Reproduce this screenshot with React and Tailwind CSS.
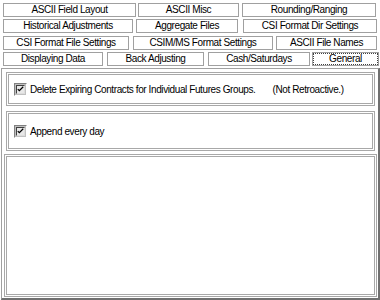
import React from "react";

const font = { fontFamily: '"Liberation Sans", Arial, sans-serif' };

function Tab({ w, ml, children, selected }) {
  return (
    <div
      className={`h-[14px] shrink-0 border border-[#a0a0a0] bg-white flex items-center justify-center text-[10px] tracking-[-0.4px] whitespace-nowrap leading-none text-black ${ml}`}
      style={{ width: w }}
    >
      {selected ? (
        <div className="w-full h-full border border-dotted border-[#404040] flex items-center justify-center">{children}</div>
      ) : (
        children
      )}
    </div>
  );
}

function Check() {
  return (
    <div className="w-[13px] h-[13px] shrink-0 border border-t-[#808080] border-l-[#808080] border-b-white border-r-white bg-[#c0c0c0] p-px">
      <div className="w-full h-full border border-t-[#404040] border-l-[#404040] border-b-[#dcdcdc] border-r-[#dcdcdc] bg-[#e8e8e8] flex items-center justify-center">
        <svg width="9" height="9" viewBox="0 0 9 9">
          <path d="M1 4 L3 6 L8 1" stroke="#000" strokeWidth="1.6" fill="none" />
        </svg>
      </div>
    </div>
  );
}

export default function App() {
  return (
    <div className="w-[380px] h-[300px] bg-white flex flex-col overflow-hidden" style={font}>
      <div className="flex pt-[3px]">
        <Tab w={133} ml="ml-[3px]">ASCII Field Layout</Tab>
        <Tab w={101} ml="ml-[2px]">ASCII Misc</Tab>
        <Tab w={134} ml="ml-[3px]">Rounding/Ranging</Tab>
      </div>
      <div className="flex mt-[2px]">
        <Tab w={130} ml="ml-[3px]">Historical Adjustments</Tab>
        <Tab w={102} ml="ml-[3px]">Aggregate Files</Tab>
        <Tab w={134} ml="ml-[5px]">CSI Format Dir Settings</Tab>
      </div>
      <div className="flex mt-[3px]">
        <Tab w={126} ml="ml-[3px]">CSI Format File Settings</Tab>
        <Tab w={140} ml="ml-[4px]">CSIM/MS Format Settings</Tab>
        <Tab w={101} ml="ml-[3px]">ASCII File Names</Tab>
      </div>
      <div className="flex mt-[2px]">
        <Tab w={100} ml="ml-[3px]">Displaying Data</Tab>
        <Tab w={97} ml="ml-[4px]">Back Adjusting</Tab>
        <Tab w={102} ml="ml-[4px]">Cash/Saturdays</Tab>
        <Tab w={67} ml="ml-[2px]" selected>General</Tab>
      </div>
      <div className="mt-[2px] flex-1 flex flex-col border-t border-l border-t-[#a0a0a0] border-l-[#a0a0a0] border-r-2 border-b-2 border-r-[#707070] border-b-[#707070] ml-[1px] pt-[3px] pl-[2px] pr-[1px] pb-[1px]">
        <div className="h-[34px] mx-[2px] border-[3px] border-double border-[#a8a8a8] flex items-center pl-[5px] gap-[3px] text-[10px] tracking-[-0.4px] whitespace-nowrap text-black">
          <Check />
          <span>Delete Expiring Contracts for Individual Futures Groups.</span>
          <span className="ml-[14px]">(Not Retroactive.)</span>
        </div>
        <div className="h-[40px] mt-[5px] mx-[2px] border-[3px] border-double border-[#a8a8a8] flex items-center pl-[5px] gap-[3px] text-[10px] tracking-[-0.4px] whitespace-nowrap text-black">
          <Check />
          <span>Append every day</span>
        </div>
        <div className="flex-1 mt-[3px] border-[3px] border-double border-[#a8a8a8]"></div>
      </div>
    </div>
  );
}
